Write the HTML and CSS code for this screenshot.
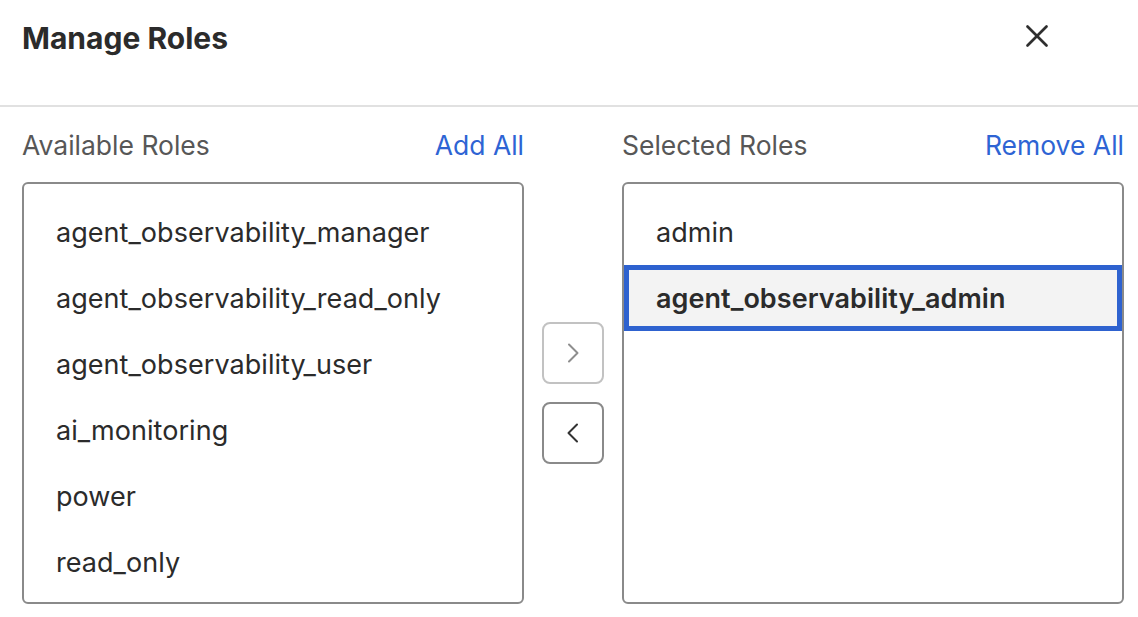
FILE: index.html
```html
<!DOCTYPE html>
<html lang="en">
<head>
  <meta charset="UTF-8" />
  <meta name="viewport" content="width=device-width, initial-scale=1.0"/>
  <title>Manage Roles</title>
  <link rel="stylesheet" href="styles.css">
</head>
<body>
  <div class="modal">
    <header class="modal-header">
      <h2 class="modal-title">Manage Roles</h2>
      <button class="close-btn" type="button" aria-label="Close">
        <svg width="22" height="22" viewBox="0 0 22 22" fill="none" stroke="currentColor" stroke-width="2.6" stroke-linecap="round">
          <line x1="1.5" y1="1.5" x2="20.5" y2="20.5"/>
          <line x1="20.5" y1="1.5" x2="1.5" y2="20.5"/>
        </svg>
      </button>
    </header>

    <div class="picker">
      <div class="picker-head">
        <span class="picker-label">Available Roles</span>
        <a class="link" href="#">Add All</a>
      </div>
      <div class="picker-head picker-head-right">
        <span class="picker-label">Selected Roles</span>
        <a class="link" href="#">Remove All</a>
      </div>

      <ul class="role-list" id="available">
        <li>agent_observability_manager</li>
        <li>agent_observability_read_only</li>
        <li>agent_observability_user</li>
        <li>ai_monitoring</li>
        <li>power</li>
        <li>read_only</li>
      </ul>

      <div class="move-btns">
        <button class="move-btn" type="button" disabled aria-label="Add">
          <svg width="20" height="20" viewBox="0 0 20 20" fill="none" stroke="currentColor" stroke-width="2" stroke-linecap="round" stroke-linejoin="round">
            <polyline points="6 1.5 14.5 10 6 18.5"/>
          </svg>
        </button>
        <button class="move-btn" type="button" aria-label="Remove">
          <svg width="20" height="20" viewBox="0 0 20 20" fill="none" stroke="currentColor" stroke-width="2" stroke-linecap="round" stroke-linejoin="round">
            <polyline points="14 1.5 5.5 10 14 18.5"/>
          </svg>
        </button>
      </div>

      <ul class="role-list" id="selected">
        <li>admin</li>
        <li class="active">agent_observability_admin</li>
      </ul>
    </div>
  </div>
</body>
</html>
```
FILE: styles.css
```css
* { box-sizing: border-box; }
body { margin: 0; background: #fff; font-family: Inter, "Noto Sans", sans-serif; color: #2b2b2b; }

.modal-header { display: flex; justify-content: space-between; align-items: center; height: 107px; padding: 0 79px 33px 22px; border-bottom: 2px solid #e1e1e1; }
.modal-title { margin: 4px 0 0; font-size: 30px; font-weight: 700; line-height: 36px; color: #2b2b2b; }
.close-btn { display: flex; align-items: center; justify-content: center; width: 44px; height: 44px; padding: 0; border: none; background: none; color: #2f2f2f; cursor: pointer; }

.picker { display: grid; grid-template-columns: 502px 62px 502px; grid-template-rows: 32px 422px; column-gap: 18px; row-gap: 21px; padding: 22px 0 0 22px; }
.picker-head { display: flex; justify-content: space-between; align-items: baseline; font-size: 26.5px; line-height: 32px; }
.picker-head-right { grid-column: 3; }
.picker-label { color: #575757; }
.link { color: #2e64d4; text-decoration: none; }

.role-list { list-style: none; margin: 0; padding: 15px 0 0; border: 2px solid #8a8a8a; border-radius: 6px; overflow: hidden; }
.role-list li { display: flex; align-items: center; height: 66px; padding-left: 32px; font-size: 27px; letter-spacing: 0.05px; color: #2b2b2b; }
.role-list li.active { background: #f3f3f3; font-weight: 600; box-shadow: inset 0 0 0 5px #2e62cf; }

.move-btns { display: flex; flex-direction: column; justify-content: center; gap: 18px; }
.move-btn { display: flex; align-items: center; justify-content: center; width: 62px; height: 62px; padding: 0; background: #fff; border: 2px solid #8a8a8a; border-radius: 8px; color: #333; cursor: pointer; }
.move-btn:disabled { border-color: #c2c2c2; color: #8e8e8e; cursor: default; }
```
